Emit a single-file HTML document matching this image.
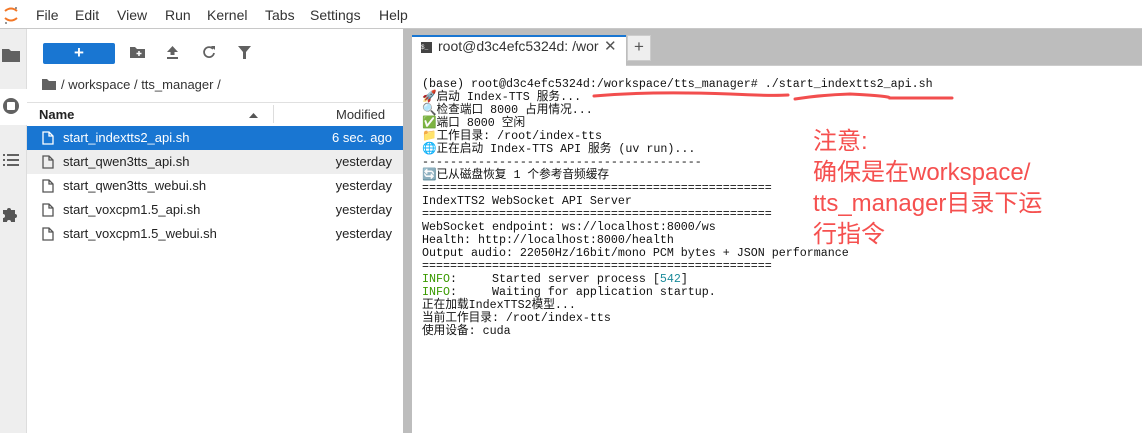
<!DOCTYPE html>
<html><head><meta charset="utf-8"><style>
*{margin:0;padding:0;box-sizing:border-box}
body{width:1142px;height:433px;overflow:hidden;background:#fff;font-family:"Liberation Sans","Noto Sans CJK SC",sans-serif;position:relative;color:#222}
.abs{position:absolute}
.menu{left:0;top:0;width:1142px;height:29px;border-bottom:1px solid #c8c8c8;background:#fff}
.menu span{position:absolute;top:7px;font-size:14px;color:#333}
.side{left:0;top:29px;width:27px;height:404px;background:#eee;border-right:1px solid #ddd}
.fb{left:27px;top:29px;width:376px;height:404px;background:#fff}
.split{left:403px;top:29px;width:9px;height:404px;background:#bdbdbd}
.row{position:absolute;left:27px;width:376px;height:24px;font-size:13px}
.row .n{position:absolute;left:36px;top:4px}
.row .m{position:absolute;right:11px;top:4px}
.row svg{position:absolute;left:15px;top:5px}
.term{left:412px;top:29px;width:730px;height:404px;background:#fff}
pre{position:absolute;left:422px;top:78px;font-family:"Liberation Mono","Noto Sans CJK SC",monospace;font-size:11.67px;line-height:13px;color:#111}
.g{color:#3a9a00}.c{color:#1a8a9a}
.note{left:813px;top:126px;font-size:24px;line-height:31px;color:#f5504f;font-family:"Liberation Sans","Noto Sans CJK SC",sans-serif;white-space:nowrap}
</style></head><body>
<div class="abs menu">
<svg class="abs" style="left:3px;top:5px" width="16" height="20" viewBox="0 0 16 20"><path d="M2 6 Q8 1 14 6" stroke="#f37726" stroke-width="2" fill="none"/><path d="M2 13 Q8 18 14 13" stroke="#f37726" stroke-width="2" fill="none"/><circle cx="3" cy="18" r="1" fill="#777"/><circle cx="13" cy="3" r="1" fill="#777"/></svg>
<span style="left:36px">File</span><span style="left:75px">Edit</span><span style="left:117px">View</span><span style="left:165px">Run</span><span style="left:207px">Kernel</span><span style="left:265px">Tabs</span><span style="left:310px">Settings</span><span style="left:379px">Help</span>
</div>
<div class="abs side">
<svg class="abs" style="left:2px;top:18px" width="18" height="15"><path d="M0 2h7l2 2h9v11H0z" fill="#616161"/></svg>
<div class="abs" style="left:0;top:60px;width:27px;height:36px;background:#fff"></div>
<svg class="abs" style="left:2px;top:68px" width="18" height="18"><circle cx="9" cy="9" r="8" fill="#616161"/><rect x="5" y="5" width="8" height="8" rx="1" fill="#fff"/></svg>
<svg class="abs" style="left:3px;top:124px" width="16" height="14"><g fill="#616161"><rect x="0" y="1" width="2" height="2"/><rect x="4" y="1" width="12" height="2"/><rect x="0" y="6" width="2" height="2"/><rect x="4" y="6" width="12" height="2"/><rect x="0" y="11" width="2" height="2"/><rect x="4" y="11" width="12" height="2"/></g></svg>
<svg class="abs" style="left:2px;top:176px" width="17" height="17"><path d="M1 5h4a2 2 0 1 1 4 0h4v4a2 2 0 1 1 0 4v4H9a2 2 0 1 0-4 0H1v-4a2 2 0 1 0 0-4z" fill="#555"/></svg>
</div>
<div class="abs fb"></div>
<div class="abs" style="left:43px;top:43px;width:72px;height:21px;background:#1976d2;border-radius:2px;color:#fff;text-align:center;font-size:17px;line-height:20px;font-weight:bold">+</div>
<svg class="abs" style="left:130px;top:46px" width="15" height="12"><path d="M0 1h5l2 2h8v9H0z" fill="#616161"/><path d="M9 5v5M6.5 7.5h5" stroke="#fff" stroke-width="1.5"/></svg>
<svg class="abs" style="left:166px;top:45px" width="13" height="14"><path d="M6.5 1L1 7h3.5v3h4V7H12z M1 12h11v2H1z" fill="#616161"/></svg>
<svg class="abs" style="left:202px;top:45px" width="14" height="14"><path d="M11 4A5 5 0 1 0 12 8" stroke="#616161" stroke-width="1.8" fill="none"/><path d="M9 1h4v4z" fill="#616161"/></svg>
<svg class="abs" style="left:238px;top:46px" width="13" height="13"><path d="M0 0h13L8 6v7H5V6z" fill="#616161"/></svg>
<svg class="abs" style="left:42px;top:78px" width="14" height="12"><path d="M0 1h5l2 2h7v9H0z" fill="#616161"/></svg>
<div class="abs" style="left:61px;top:77px;font-size:13px;color:#333">/ workspace / tts_manager /</div>
<div class="abs" style="left:27px;top:102px;width:376px;height:25px;border-top:1px solid #e0e0e0;border-bottom:1px solid #e0e0e0"></div>
<div class="abs" style="left:39px;top:107px;font-size:13px;font-weight:bold">Name</div>
<svg class="abs" style="left:249px;top:113px" width="9" height="5"><path d="M0 5L4.5 0 9 5z" fill="#555"/></svg>
<div class="abs" style="left:273px;top:105px;width:1px;height:18px;background:#ddd"></div>
<div class="abs" style="left:336px;top:107px;font-size:13px;color:#333">Modified</div>
<div class="row" style="top:126px;background:#1976d2;color:#fff"><svg width="12" height="14"><path d="M1 1h6l4 4v8H1z M7 1v4h4" stroke="#fff" stroke-width="1.3" fill="none"/></svg><span class="n">start_indextts2_api.sh</span><span class="m">6 sec. ago</span></div>
<div class="row" style="top:150px;background:#eee"><svg width="12" height="14"><path d="M1 1h6l4 4v8H1z M7 1v4h4" stroke="#555" stroke-width="1.3" fill="none"/></svg><span class="n">start_qwen3tts_api.sh</span><span class="m">yesterday</span></div>
<div class="row" style="top:174px"><svg width="12" height="14"><path d="M1 1h6l4 4v8H1z M7 1v4h4" stroke="#555" stroke-width="1.3" fill="none"/></svg><span class="n">start_qwen3tts_webui.sh</span><span class="m">yesterday</span></div>
<div class="row" style="top:198px"><svg width="12" height="14"><path d="M1 1h6l4 4v8H1z M7 1v4h4" stroke="#555" stroke-width="1.3" fill="none"/></svg><span class="n">start_voxcpm1.5_api.sh</span><span class="m">yesterday</span></div>
<div class="row" style="top:222px"><svg width="12" height="14"><path d="M1 1h6l4 4v8H1z M7 1v4h4" stroke="#555" stroke-width="1.3" fill="none"/></svg><span class="n">start_voxcpm1.5_webui.sh</span><span class="m">yesterday</span></div>
<div class="abs split"></div>
<div class="abs term"></div>
<div class="abs" style="left:412px;top:29px;width:730px;height:37px;background:#bdbdbd;border-bottom:1px solid #ccc"></div>
<div class="abs" style="left:412px;top:35px;width:214px;height:32px;background:#fff;border-top:2px solid #1976d2"></div>
<div class="abs" style="left:421px;top:42px;width:11px;height:11px;background:#444;color:#fff;font-size:6px;line-height:11px;font-family:'Liberation Mono',monospace">$_</div>
<div class="abs" style="left:438px;top:38px;font-size:14px;color:#333">root@d3c4efc5324d: /wor</div>
<div class="abs" style="left:604px;top:37px;font-size:15px;color:#555">✕</div>
<div class="abs" style="left:627px;top:35px;width:24px;height:26px;background:#eee;border:1px solid #ccc;text-align:center;font-size:17px;line-height:22px;color:#555">+</div>
<pre>(base) root@d3c4efc5324d:/workspace/tts_manager# ./start_indextts2_api.sh
🚀启动 Index-TTS 服务...
🔍检查端口 8000 占用情况...
✅端口 8000 空闲
📁工作目录: /root/index-tts
🌐正在启动 Index-TTS API 服务 (uv run)...
----------------------------------------
🔄已从磁盘恢复 1 个参考音频缓存
==================================================
IndexTTS2 WebSocket API Server
==================================================
WebSocket endpoint: ws://localhost:8000/ws
Health: http://localhost:8000/health
Output audio: 22050Hz/16bit/mono PCM bytes + JSON performance
==================================================
<span class="g">INFO</span>:     Started server process [<span class="c">542</span>]
<span class="g">INFO</span>:     Waiting for application startup.
正在加载IndexTTS2模型...
当前工作目录: /root/index-tts
使用设备: cuda</pre>
<svg class="abs" style="left:590px;top:90px" width="370" height="14"><path d="M4 6 Q60 1 140 4 Q180 6 198 5" stroke="#f24e4e" stroke-width="3" fill="none" stroke-linecap="round"/><path d="M205 9 Q230 5 260 4 Q300 6 300 8 Q340 8 362 8" stroke="#f24e4e" stroke-width="3" fill="none" stroke-linecap="round"/></svg>
<div class="abs note">注意:<br>确保是在workspace/<br>tts_manager目录下运<br>行指令</div>
</body></html>
